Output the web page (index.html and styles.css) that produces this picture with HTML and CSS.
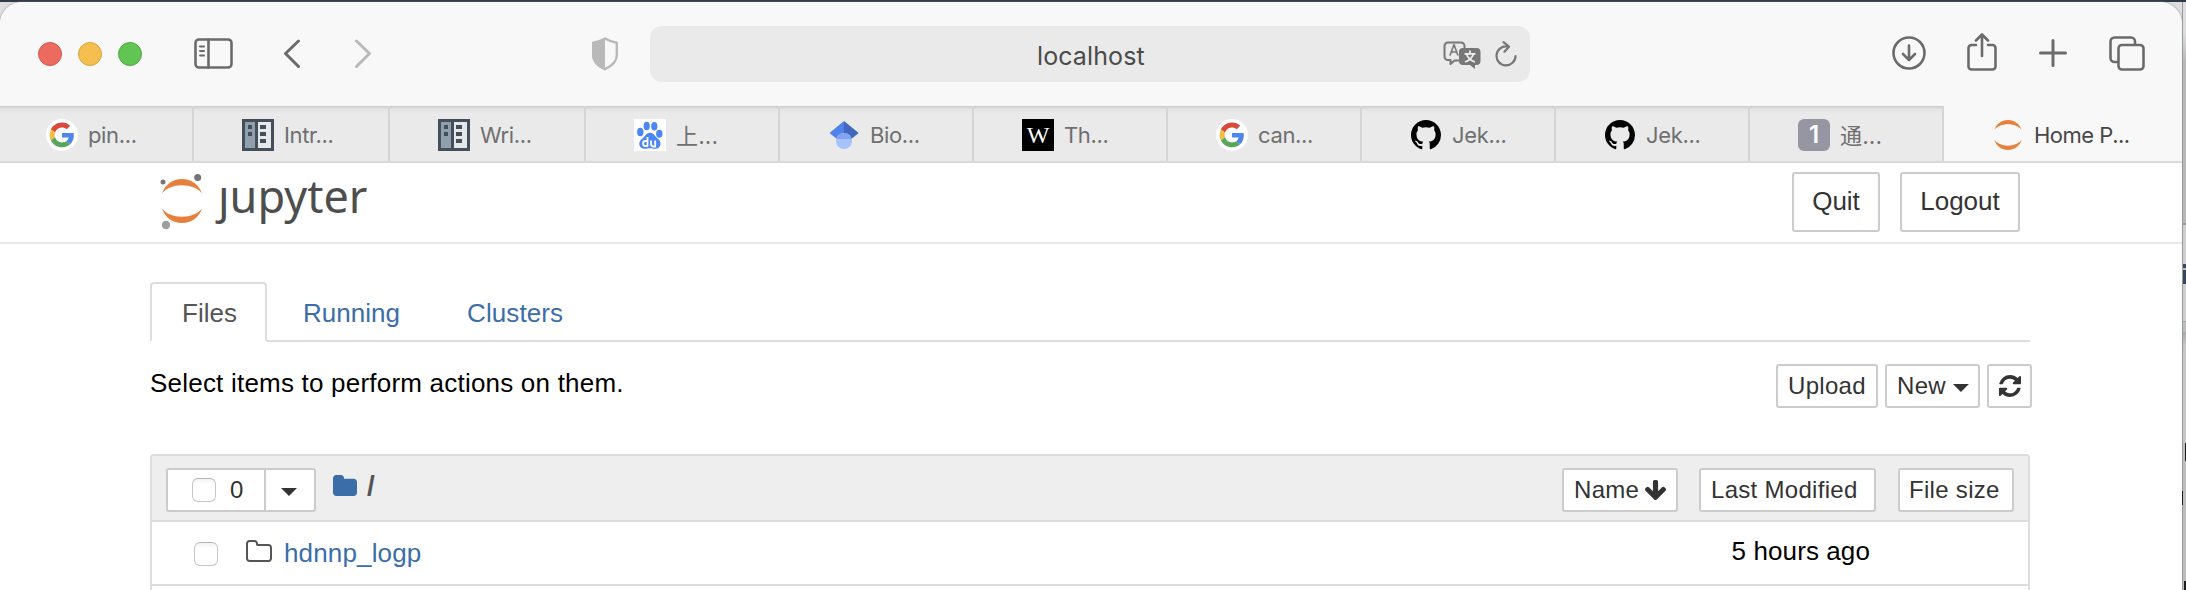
FILE: index.html
```html
<!DOCTYPE html>
<html lang="en">
<head>
<meta charset="utf-8">
<title>Home Page - Select or create a notebook</title>
<link rel="stylesheet" href="styles.css">
</head>
<body>
<svg class="defs" width="0" height="0">
  <symbol id="google" viewBox="0 0 32 32">
    <circle cx="16" cy="16" r="16" fill="#fff"/>
    <g transform="translate(3.6 3.6) scale(.515)">
      <path fill="#db4a39" d="M24 9.5c3.54 0 6.71 1.22 9.21 3.6l6.85-6.85C35.9 2.38 30.47 0 24 0 14.62 0 6.51 5.38 2.56 13.22l7.98 6.19C12.43 13.72 17.74 9.5 24 9.5z"/>
      <path fill="#4f86ec" d="M46.98 24.55c0-1.57-.15-3.09-.38-4.55H24v9.02h12.94c-.58 2.96-2.26 5.48-4.78 7.18l7.73 6c4.51-4.18 7.09-10.36 7.09-17.65z"/>
      <path fill="#f2bd42" d="M10.53 28.59A14.5 14.5 0 0 1 9.77 24c0-1.6.27-3.14.76-4.59l-7.98-6.19A23.9 23.9 0 0 0 0 24c0 3.88.92 7.54 2.56 10.78l7.97-6.19z"/>
      <path fill="#58a55c" d="M24 48c6.48 0 11.93-2.13 15.89-5.81l-7.73-6c-2.15 1.45-4.92 2.3-8.16 2.3-6.26 0-11.57-4.22-13.47-9.91l-7.98 6.19C6.51 42.62 14.62 48 24 48z"/>
    </g>
  </symbol>
  <symbol id="book" viewBox="0 0 32 32">
    <path fill="#454f59" d="M0 0h32v32H0z"/>
    <path fill="#8f9fae" d="M3 3h10v26H3z"/><path fill="#e4e8eb" d="M16 3h13v26H16z"/>
    <path fill="#454f59" d="M6 6h4v4H6zm0 7h4v4H6zM18 6h6v4h-6zm0 7h6v4h-6zm0 7h6v4h-6z"/>
  </symbol>
  <symbol id="github" viewBox="0 0 16 16">
    <path d="M8 0C3.58 0 0 3.58 0 8c0 3.54 2.29 6.53 5.47 7.59.4.07.55-.17.55-.38 0-.19-.01-.82-.01-1.49-2.01.37-2.53-.49-2.69-.94-.09-.23-.48-.94-.82-1.13-.28-.15-.68-.52-.01-.53.63-.01 1.08.58 1.23.82.72 1.21 1.87.87 2.33.66.07-.52.28-.87.51-1.07-1.78-.2-3.64-.89-3.64-3.95 0-.87.31-1.59.82-2.15-.08-.2-.36-1.02.08-2.12 0 0 .67-.21 2.2.82.64-.18 1.32-.27 2-.27s1.36.09 2 .27c1.53-1.04 2.2-.82 2.2-.82.44 1.1.16 1.92.08 2.12.51.56.82 1.27.82 2.15 0 3.07-1.87 3.75-3.65 3.95.29.25.54.73.54 1.48 0 1.07-.01 1.93-.01 2.2 0 .21.15.46.55.38A8.01 8.01 0 0 0 16 8c0-4.42-3.58-8-8-8z"/>
  </symbol>
  <symbol id="planet" viewBox="0 0 40 44">
    <path fill="#e6803c" d="M0 14.5C3 5.500 10.500 0 20 0s17 5.500 20 14.500C36 9.300 28.500 6.300 20 6.300S4 9.300 0 14.500zM0 29.500C3 38.500 10.500 44 20 44s17-5.500 20-14.500c-4 5.200-11.500 8.200-20 8.200s-16-3-20-8.200z"/>
  </symbol>
</svg>

<div class="screen">
  <div class="window">
    <header class="toolbar">
      <div class="lights"><i class="light red"></i><i class="light yellow"></i><i class="light green"></i></div>
      <svg class="ic sidebar" width="39" height="31" viewBox="0 0 39 31"><rect x="1.500" y="1.500" width="36" height="28" rx="3.500"/><path d="M14.500 1.500v28"/><path class="thin" d="M6 8.500h4M6 13h4M6 17.500h4"/></svg>
      <svg class="ic back" width="18" height="30" viewBox="0 0 18 30"><path d="M15.500 2 2.500 14.500l13 13"/></svg>
      <svg class="ic forward" width="18" height="30" viewBox="0 0 18 30"><path d="m2.500 2 13 12.500-13 13"/></svg>
      <svg class="shield" width="28" height="34" viewBox="0 0 28 34"><path class="outline" d="M14 1.500c4 2.500 8 3.500 11.800 4.200V18c0 6-5 11-11.800 14.200C7.200 29 2.200 24 2.200 18V5.700C6 5 10 4 14 1.500z"/><path class="half" d="M14 1C10 3.500 6 4.500 1 5.500V18c0 6.500 5 12 13 15.500z"/></svg>
      <div class="address">
        <span class="host">localhost</span>
        <svg class="translate" width="38" height="28" viewBox="0 0 38 28"><path class="bubble" d="M16 19.500h-4.500L7.500 23v-4H5a3.500 3.500 0 0 1-3.500-3.500V5A3.500 3.500 0 0 1 5 1.500h13A3.500 3.500 0 0 1 21.500 5v3"/><path class="letter" d="m7 14.500 4-11 4 11M8.500 11h5.500"/><path class="fill" d="M20 7h13.500a4 4 0 0 1 4 4v9a4 4 0 0 1-4 4H32v4l-5-4h-7a4 4 0 0 1-4-4v-9a4 4 0 0 1 4-4z"/><path class="hanzi" d="M27 9.500v3M21.500 12.800h11M30.500 13c-1.500 4-4 6.500-8.500 8M23.500 13c1.500 4 4 6.500 8.500 8"/></svg>
        <svg class="reload" width="22" height="26" viewBox="0 0 22 26"><path d="M12 5.500A9.500 9.500 0 1 0 20.500 15M8.500 1.200 14 5.700l-4.500 5"/></svg>
      </div>
      <svg class="ic download" width="34" height="34" viewBox="0 0 34 34"><circle cx="17" cy="17" r="15.500"/><path d="M17 9.500v14M11 18l6 6 6-6"/></svg>
      <svg class="ic share" width="30" height="38" viewBox="0 0 30 38"><path d="M9 12H4.500a3 3 0 0 0-3 3v18.500a3 3 0 0 0 3 3h21a3 3 0 0 0 3-3V15a3 3 0 0 0-3-3H21M15 23V2M9 7.500 15 1.500l6 6"/></svg>
      <svg class="ic plus" width="28" height="28" viewBox="0 0 28 28"><path d="M14 1.500v25M1.500 14h25"/></svg>
      <svg class="ic tabsicon" width="36" height="35" viewBox="0 0 36 35"><path d="M8 26H5.500a4 4 0 0 1-4-4V5.500a4 4 0 0 1 4-4H22a4 4 0 0 1 4 4V8"/><rect x="9.500" y="9" width="25" height="24.500" rx="3.500"/></svg>
    </header>

    <nav class="tabbar">
      <div class="tab first"><svg class="fav"><use href="#google"/></svg><span>pin...</span></div>
      <div class="tab"><svg class="fav"><use href="#book"/></svg><span>Intr...</span></div>
      <div class="tab"><svg class="fav"><use href="#book"/></svg><span>Wri...</span></div>
      <div class="tab"><svg class="fav" viewBox="0 0 32 32"><path fill="#fff" d="M0 0h32v32H0z"/><g fill="#4a87f5"><ellipse cx="6.300" cy="13" rx="3.200" ry="4.200"/><ellipse cx="12.700" cy="7" rx="3.100" ry="4.300"/><ellipse cx="20.300" cy="7.300" rx="3.100" ry="4.300"/><ellipse cx="25.300" cy="14.800" rx="3.200" ry="4"/><path d="M16 13.800c3.500 0 4.500 3 7 5.200 2.600 2.200 3.800 3.800 3.500 6.500-.4 3-2.700 4.500-5.500 4.300-2-.1-3-.5-5-.5s-3 .5-5 .5c-3 .2-5.500-1.500-5.700-4.500-.2-2.500 1.200-4.200 3.700-6.300 2.500-2.200 3.500-5.200 7-5.200z"/></g><path fill="none" stroke="#fff" stroke-width="1.800" d="M13.500 18v9.500M13.500 22h-2.200c-3 0-3 5 0 5h2.200M17 21.500V25c0 2 1 2.500 2.500 2.500h1.700v-6"/></svg><span class="cjk">上...</span></div>
      <div class="tab"><svg class="fav" viewBox="0 0 32 32"><path fill="#4f82ea" d="M16 2 1.500 14 9 20h7z"/><path fill="#4268bd" d="m16 2 14.700 12-7.500 6H16z"/><circle cx="16" cy="22" r="8" fill="#a5c2fa"/><path fill="#80a4f2" d="M8.300 20a8 8 0 0 1 15.400 0z"/></svg><span>Bio...</span></div>
      <div class="tab"><b class="fav wiki">W</b><span>Th...</span></div>
      <div class="tab"><svg class="fav"><use href="#google"/></svg><span>can...</span></div>
      <div class="tab"><svg class="fav cat"><use href="#github"/></svg><span>Jek...</span></div>
      <div class="tab"><svg class="fav cat"><use href="#github"/></svg><span>Jek...</span></div>
      <div class="tab"><b class="fav one">1</b><span class="cjk">通...</span></div>
      <div class="tab active"><svg class="fav orbit"><use href="#planet"/></svg><span>Home P...</span></div>
    </nav>

    <section class="masthead">
      <div class="brand">
        <svg width="44" height="58" viewBox="0 0 44 58"><svg x="2" y="7" width="40" height="44"><use href="#planet"/></svg><circle cx="3" cy="10" r="2.500" fill="#767677"/><circle cx="37.700" cy="5.500" r="3.500" fill="#767677"/><circle cx="6" cy="53" r="4.200" fill="#9e9e9e"/></svg>
        <span class="word">jupyter</span>
      </div>
      <div class="session"><button class="btn tall quit">Quit</button><button class="btn tall logout">Logout</button></div>
    </section>

    <main class="content">
      <ul class="navtabs"><li class="current">Files</li><li class="running">Running</li><li>Clusters</li></ul>
      <div class="actions">
        <p class="hint">Select items to perform actions on them.</p>
        <div class="buttons">
          <button class="btn upload">Upload</button>
          <button class="btn new">New<i class="caret"></i></button>
          <button class="btn refresh"><svg width="22" height="22" viewBox="0 0 1536 1536"><path d="M1511 928q0 5-1 7-64 268-268 434.500t-478 166.500q-146 0-282.500-55t-243.500-157l-129 129q-19 19-45 19t-45-19-19-45v-448q0-26 19-45t45-19h448q26 0 45 19t19 45-19 45l-137 137q71 66 161 102t187 36q134 0 250-65t186-179q11-17 53-117 8-23 30-23h192q13 0 22.500 9.500t9.500 22.500zm25-800v448q0 26-19 45t-45 19h-448q-26 0-45-19t-19-45 19-45l138-138q-148-137-349-137-134 0-250 65t-186 179q-11 17-53 117-8 23-30 23h-199q-13 0-22.500-9.500t-9.500-22.500v-7q65-268 270-434.500t480-166.500q146 0 284 55.500t245 156.500l130-129q19-19 45-19t45 19 19 45z"/></svg></button>
        </div>
      </div>
      <div class="list">
        <div class="listhead">
          <div class="selector"><div class="btn count"><i class="check"></i>0</div><div class="btn drop"><i class="caret wide"></i></div></div>
          <svg class="folder" width="24" height="21" viewBox="64 128 1664 1408" preserveAspectRatio="none"><path d="M1728 608v704q0 92-66 158t-158 66h-1216q-92 0-158-66t-66-158v-960q0-92 66-158t158-66h320q92 0 158 66t66 158v32h672q92 0 158 66t66 158z"/></svg>
          <span class="slash">/</span>
          <div class="sorts">
            <button class="btn name">Name<svg width="21" height="20" viewBox="117 128 1558 1483" preserveAspectRatio="none"><path d="M1675 832q0 53-37 90l-651 652q-39 37-91 37-53 0-90-37l-651-652q-38-36-38-90 0-53 38-91l74-75q39-37 91-37 53 0 90 37l294 294v-704q0-52 38-90t90-38h128q52 0 90 38t38 90v704l294-294q37-37 90-37 52 0 91 37l75 75q37 39 37 91z"/></svg></button>
            <button class="btn modified">Last Modified</button>
            <button class="btn size">File size</button>
          </div>
        </div>
        <div class="row">
          <i class="check"></i>
          <svg class="foldero" width="26" height="22" viewBox="64 128 1664 1408" preserveAspectRatio="none"><path d="M1600 1312v-704q0-40-28-68t-68-28h-704q-40 0-68-28t-28-68v-64q0-40-28-68t-68-28h-320q-40 0-68 28t-28 68v960q0 40 28 68t68 28h1216q40 0 68-28t28-68zm128-704v704q0 92-66 158t-158 66h-1216q-92 0-158-66t-66-158v-960q0-92 66-158t158-66h320q92 0 158 66t66 158v32h672q92 0 158 66t66 158z"/></svg>
          <a class="file">hdnnp_logp</a>
          <span class="time">5 hours ago</span>
        </div>
      </div>
    </main>
  </div>
  <aside class="behind">
    <i class="b1"></i><i class="b2"></i><i class="ink dot"></i><i class="ink stem"></i><i class="b3"></i><i class="b4"></i><i class="dark edge"></i><i class="b5"></i><i class="dark mark"></i><i class="b6"></i><i class="dark end"></i>
  </aside>
</div>
</body>
</html>
```
FILE: styles.css
```css
* { box-sizing: border-box; }
body { margin: 0; width: 2186px; height: 590px; overflow: hidden; background: #dedede; font-family: "Liberation Sans", Arial, sans-serif; font-size: 26px; color: #000; }
.defs { position: absolute; }
svg { display: block; flex: none; }
i { display: block; flex: none; font-style: normal; }
.screen { display: flex; height: 590px; border-top: 2px solid #303b49; }
.window { width: 2182px; height: 588px; flex: none; overflow: hidden; background: #fff; border-radius: 22px 22px 0 0; box-shadow: 0 0 2px #777; }

.toolbar { height: 104px; display: flex; align-items: flex-start; background: #f8f8f8; }
.ic { fill: none; stroke: #6b6b6b; stroke-width: 2.6; stroke-linecap: round; stroke-linejoin: round; }
.lights { display: flex; gap: 16px; margin: 40px 0 0 38px; }
.light { width: 24px; height: 24px; border-radius: 50%; border: 1px solid; }
.red { background: #ed6a5e; border-color: #d5584c; }
.yellow { background: #f5bf4f; border-color: #d9a33c; }
.green { background: #61c554; border-color: #4fa942; }
.sidebar { margin: 35.500px 0 0 51.500px; }
.sidebar .thin { stroke-width: 2; }
.back { margin: 36.500px 0 0 50.500px; stroke-width: 3; }
.forward { margin: 36.500px 0 0 53px; stroke: #b9b9b9; stroke-width: 3; }
.shield { margin: 35px 0 0 218.500px; }
.outline { fill: none; stroke: #b9b9b9; stroke-width: 2.4; stroke-linejoin: round; }
.half { fill: #b9b9b9; }
.address { width: 880px; height: 56px; margin: 24px 0 0 31.500px; border-radius: 12px; background: #eaeaea; display: flex; align-items: flex-start; }
.host { margin: 15px 0 0 387px; width: 108px; white-space: nowrap; font: 25px/30px Inter, sans-serif; letter-spacing: .1px; color: #4b4b4b; }
.translate { margin: 15px 0 0 298px; fill: none; stroke: #777; stroke-width: 2; stroke-linejoin: round; }
.translate .letter { stroke-width: 1.6; }
.translate .fill { fill: #777; stroke: none; }
.translate .hanzi { stroke: #eee; stroke-width: 1.8; }
.reload { margin: 15px 0 0 14px; fill: none; stroke: #777; stroke-width: 2.2; stroke-linecap: round; stroke-linejoin: round; }
.download { margin: 34px 0 0 361.500px; }
.share { margin: 31px 0 0 41px; }
.plus { margin: 36.500px 0 0 42px; stroke-width: 3; }
.tabsicon { margin: 34px 0 0 42.500px; }

.tabbar { height: 57px; display: grid; grid-template-columns: 194px 196px 196px repeat(7, 194px) 238px; border-bottom: 2px solid #dadada; background: #f8f8f8; font: 22px/28px Inter, sans-serif; letter-spacing: -.35px; color: #6f6f6f; }
.tab { display: flex; align-items: flex-start; gap: 10px; padding: 13px 0 0 48px; border-right: 2px solid #d5d5d5; background: linear-gradient(#c5c6c6 0, #dedede 2px, #e7e7e7 5px, #eaeaea 9px); }
.tab span { white-space: nowrap; margin-top: 2px; }
.tab.first { padding-left: 46px; }
.tab.active { background: none; border: 0; color: #474747; letter-spacing: -.5px; }
.tab .cjk { font-family: "Noto Sans CJK SC", sans-serif; margin-top: 1px; letter-spacing: .5px; }
.fav { width: 32px; height: 32px; flex: none; }
.cat { width: 30px; height: 30px; margin: 1px; }
.orbit { width: 30px; height: 30px; margin: 1px; }
.wiki { background: #000; color: #fff; font: 24px/32px "Liberation Serif", serif; letter-spacing: 0; text-align: center; }
.one { background: #9696a2; color: #fff; border-radius: 6px; font: 600 24px/32px Inter, sans-serif; text-align: center; }

.masthead { height: 81px; display: flex; justify-content: space-between; padding: 9px 162px 0 160px; border-bottom: 2px solid #e7e7e7; }
.brand { display: flex; }
.word { font: 45px/60px "Noto Sans", sans-serif; color: #4e4e4e; margin: -6px 0 0 14px; height: 64px; clip-path: polygon(-12px 21px, 13px 21px, 13px 0, 200px 0, 200px 100%, -12px 100%); }
.session { display: flex; gap: 20px; }
.btn { height: 44px; margin: 0; padding: 0 10px; border: 2px solid #ccc; border-radius: 3px; background: #fff; color: #333; font: 24px/40px "Liberation Sans", Arial, sans-serif; letter-spacing: .3px; text-align: left; display: flex; align-items: center; white-space: nowrap; }
.btn.tall { height: 60px; padding: 0 0 2px; justify-content: center; font-size: 26px; letter-spacing: 0; }
.btn svg { fill: #333; }
.quit { width: 88px; }
.logout { width: 120px; }

.content { padding: 38px 152px 0 150px; }
.navtabs { margin: 0; padding: 0; list-style: none; display: flex; height: 60px; color: #3b6ea8; border-bottom: 2px solid #ddd; line-height: 30px; }
.navtabs li { padding: 16px 0 0 36px; letter-spacing: .1px; }
.navtabs .current { width: 117px; height: 60px; padding: 14px 0 0 30px; border: 2px solid #ddd; border-bottom-color: #fff; border-radius: 4px 4px 0 0; color: #555; letter-spacing: 0; }
.navtabs .running { width: 164px; letter-spacing: 0; }
.actions { display: flex; justify-content: space-between; padding-top: 22px; margin-right: -2px; height: 112px; }
.hint { margin: 4px 0 0; line-height: 30px; letter-spacing: .21px; white-space: nowrap; }
.buttons { display: flex; gap: 7px; }
.upload { width: 102px; }
.new { width: 95px; }
.refresh { width: 45px; padding: 0 10px; }
.caret { width: 16px; height: 8px; margin: 4px 0 0 7px; background: #333; clip-path: polygon(0 0, 100% 0, 50% 100%); }
.caret.wide { margin: 4px 0 0 5px; }

.list { border: 2px solid #ddd; border-bottom: 0; border-radius: 4px 4px 0 0; overflow: hidden; height: 140px; }
.listhead { height: 66px; display: flex; align-items: flex-start; padding: 12px 14px 0; background: #eee; border-bottom: 2px solid #ddd; }
.selector { display: flex; }
.count { width: 100px; padding-left: 24px; border-radius: 3px 0 0 3px; gap: 14px; }
.drop { width: 52px; margin-left: -2px; border-radius: 0 3px 3px 0; }
.check { width: 24px; height: 24px; border: 1.5px solid #c6c6c6; border-top-color: #b5b5b5; border-radius: 6px; background: linear-gradient(#f1f1f1, #fff 5px); }
.folder { margin: 7px 0 0 17px; fill: #3b6ea8; }
.slash { margin: 3px 0 0 10px; line-height: 30px; font-size: 28px; font-weight: bold; color: #555; }
.sorts { display: flex; margin-left: auto; }
.name { width: 116px; padding: 0 10px; gap: 6px; }
.modified { width: 177px; margin-left: 21px; }
.size { width: 116px; margin-left: 22px; padding-left: 9px; }
.row { height: 64px; display: flex; align-items: flex-start; border-bottom: 2px solid #ddd; line-height: 30px; }
.row .check { margin: 20px 0 0 42px; }
.foldero { margin: 18px 0 0 28px; fill: #555; }
.file { margin: 16px 0 0 12px; color: #3b6ea8; letter-spacing: .15px; }
.time { margin: 14px 158px 0 auto; letter-spacing: .1px; }

.behind { width: 4px; background: #bcbebe; border-left: 1px solid #999; }
.b1 { height: 223px; background: linear-gradient(#dedede 30px, #b7b9b9 60px); border-bottom: 2px solid #999; }
.b2 { height: 39px; background: #cecece; }
.ink { background: #39475c; }
.dot { height: 4px; margin-bottom: 2px; }
.stem { height: 14px; }
.b3 { height: 38px; background: #cecece; border-bottom: 1px solid #aaa; }
.b4 { height: 111px; margin-top: 10px; background: linear-gradient(#a8a8a8, #c6c8c8 14px); }
.dark { background: #1d1d1d; margin-left: 2px; }
.edge { height: 18px; }
.b5 { height: 30px; }
.mark { height: 14px; margin-left: -1px; width: 1px; }
.b6 { height: 76px; }
.end { height: 14px; margin-left: 1px; }
```
